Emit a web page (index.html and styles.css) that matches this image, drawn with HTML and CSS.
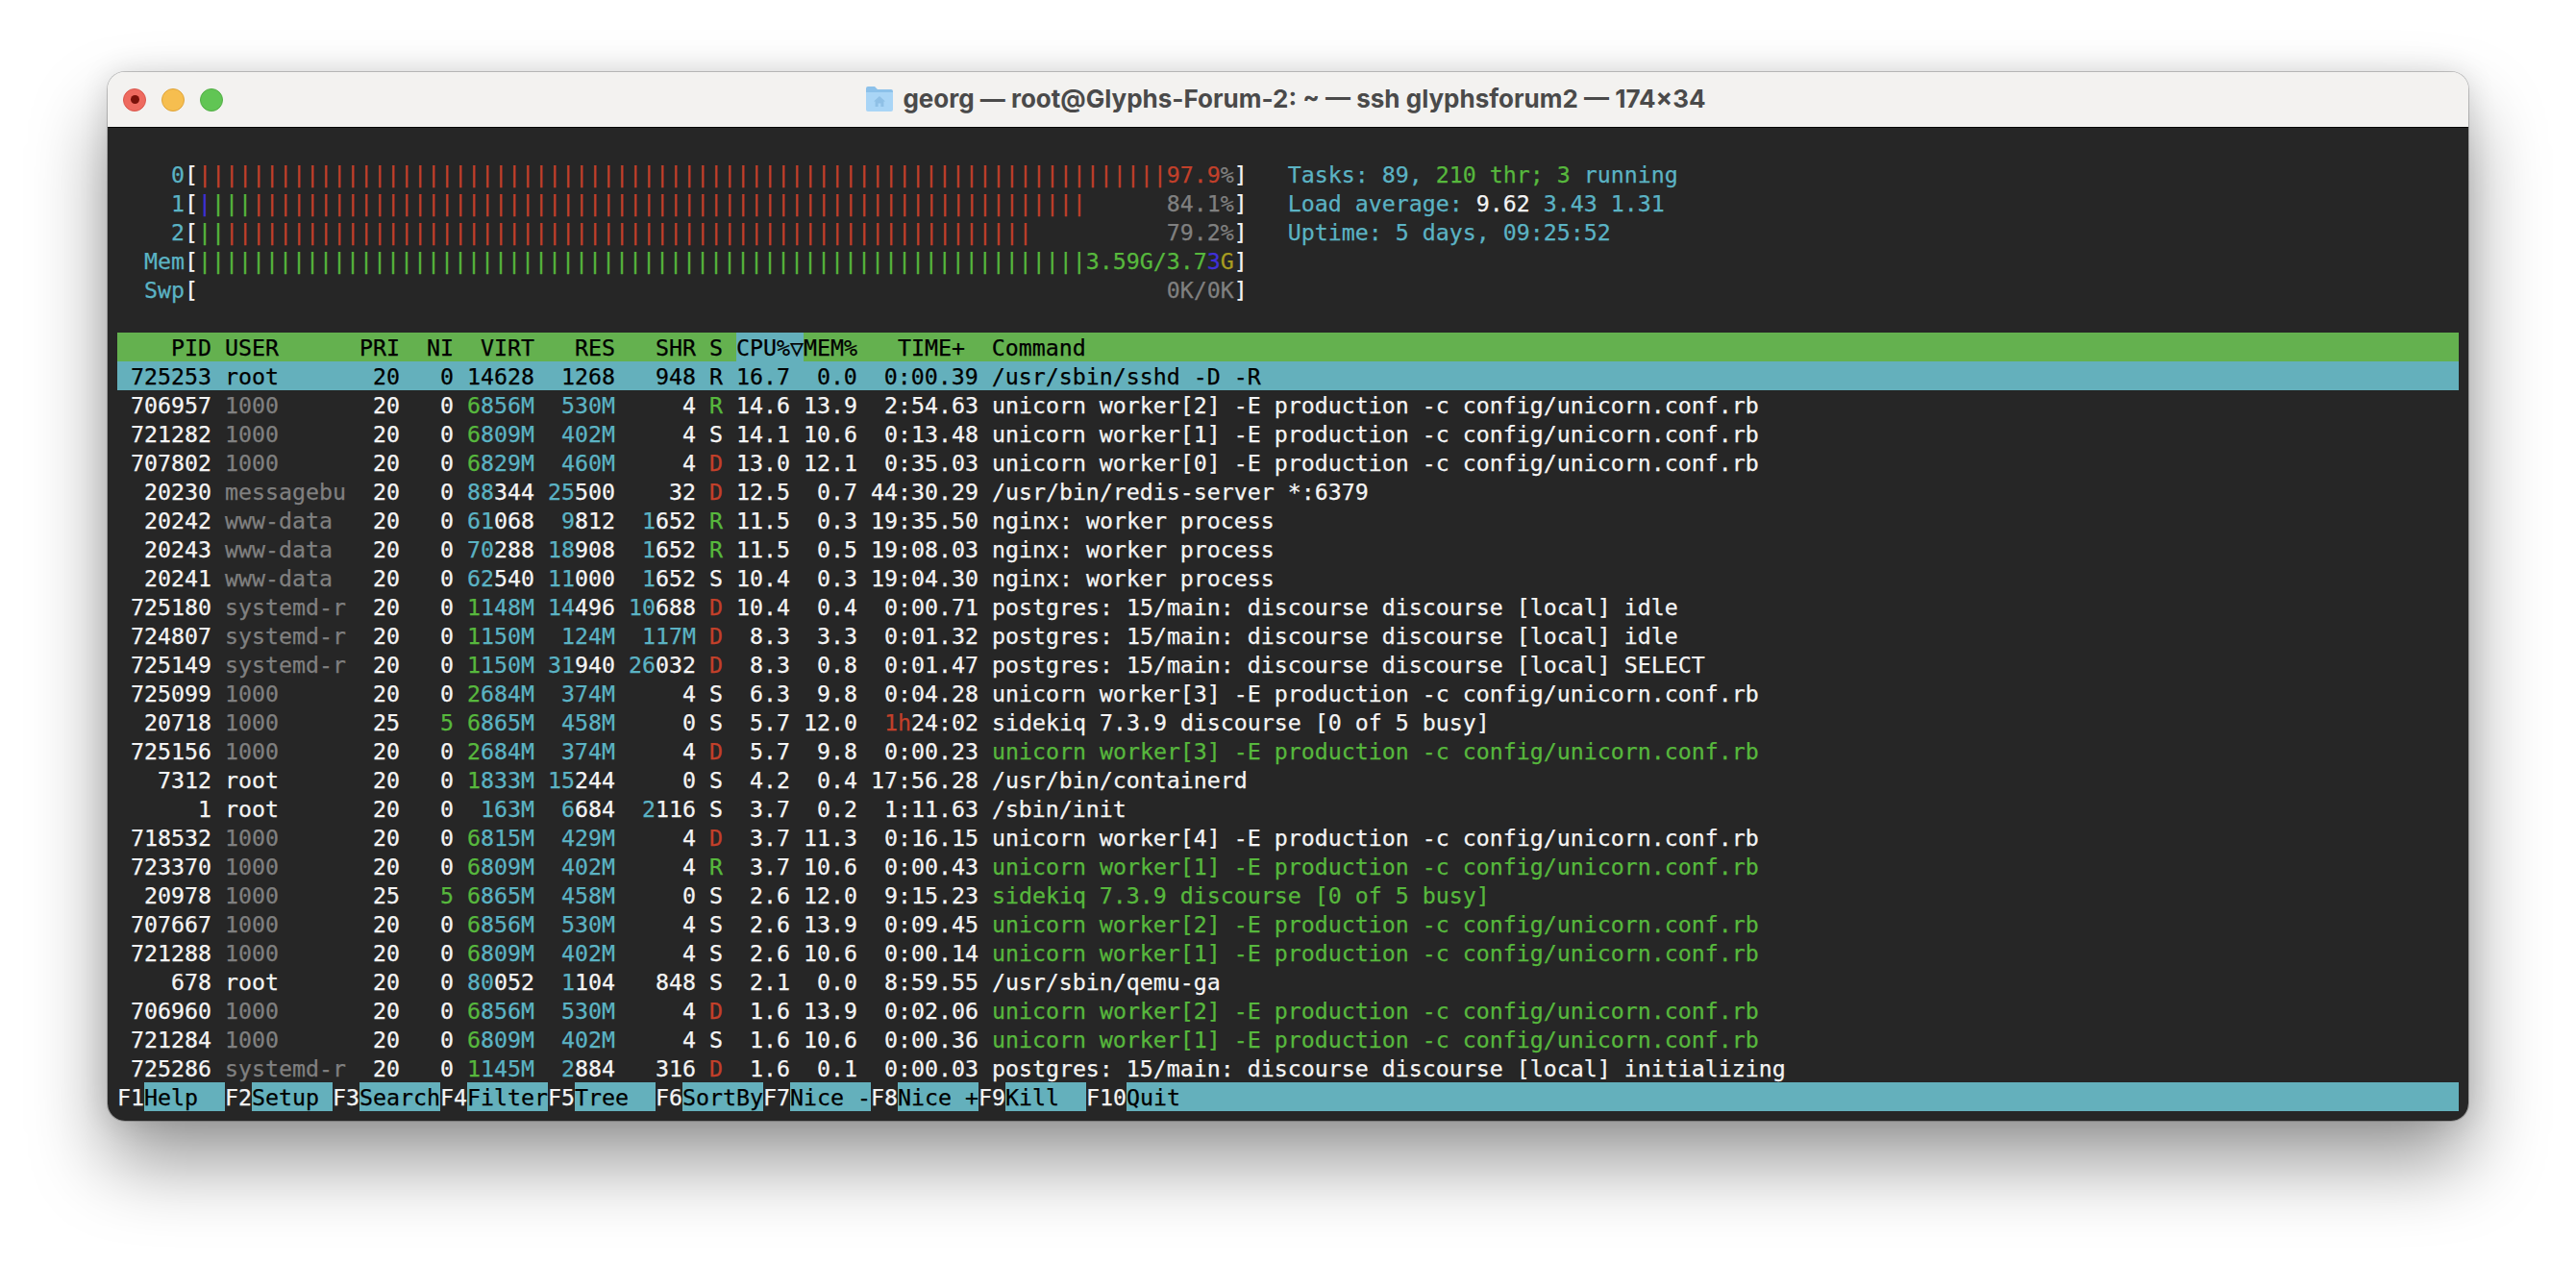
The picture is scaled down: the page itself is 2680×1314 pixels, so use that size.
FILE: index.html
```html
<!DOCTYPE html>
<html lang="en">
<head>
    <meta charset="UTF-8">
    <title>georg — root@Glyphs-Forum-2: ~ — ssh glyphsforum2 — 174×34</title>
    <link rel="stylesheet" href="styles.css">
</head>
<body>

    <div class="window">
        <!-- Title bar -->
        <div class="titlebar">
            <div class="lights">
                <span class="light close"></span>
                <span class="light minimize"></span>
                <span class="light zoom"></span>
            </div>
            <div class="title">
                <svg class="folder" width="30" height="27" viewBox="0 0 30 27">
                    <path d="M1 3a2 2 0 0 1 2-2h7l3 3h14a2 2 0 0 1 2 2v4H1z" fill="#8cc1ea"/>
                    <path d="M1 7h28v18a2 2 0 0 1-2 2H3a2 2 0 0 1-2-2z" fill="#a9d5f6"/>
                    <path d="M15 11l-6 5.5h1.6V22h3v-3.5h2.800V22h3v-5.500H21z" fill="#8fc0e6"/>
                </svg>
                <span>georg — root@Glyphs-Forum-2: ~ — ssh glyphsforum2 — 174×34</span>
            </div>
            <div></div>
        </div>

        <div class="terminal">
            <!-- Meters -->
            <div class="row"> </div>
            <div class="row"><span class="cy">    0</span>[<span class="rd">||||||||||||||||||||||||||||||||||||||||||||||||||||||||||||||||||||||||</span><span class="rd">97.9</span><span class="dm">%</span>]   <span class="cy">Tasks: 89, </span><span class="gn">210 thr; 3</span><span class="cy"> running</span></div>
            <div class="row"><span class="cy">    1</span>[<span class="bl">|</span><span class="gn">|||</span><span class="rd">||||||||||||||||||||||||||||||||||||||||||||||||||||||||||||||</span>      <span class="dm">84.1%</span>]   <span class="cy">Load average: </span>9.62 <span class="cy">3.43 1.31</span></div>
            <div class="row"><span class="cy">    2</span>[<span class="gn">||</span><span class="rd">||||||||||||||||||||||||||||||||||||||||||||||||||||||||||||</span>          <span class="dm">79.2%</span>]   <span class="cy">Uptime: 5 days, 09:25:52</span></div>
            <div class="row"><span class="cy">  Mem</span>[<span class="gn">||||||||||||||||||||||||||||||||||||||||||||||||||||||||||||||||||3.59G/3.7</span><span class="bl">3</span><span class="ye">G</span>]</div>
            <div class="row"><span class="cy">  Swp</span>[                                                                        <span class="dm">0K/0K</span>]</div>
            <div class="row"> </div>

            <!-- Process table -->
            <div class="row head">    PID USER      PRI  NI  VIRT   RES   SHR S <span class="sorted">CPU%▽</span>MEM%   TIME+  Command</div>
            <div class="row selected"> 725253 root       20   0 14628  1268   948 R 16.7  0.0  0:00.39 /usr/sbin/sshd -D -R</div>
            <div class="row"> 706957 <span class="dm">1000     </span>  20   0 <span class="gn">6</span><span class="cy">856M</span>  <span class="cy">530M</span>     4 <span class="gn">R</span> 14.6 13.9  2:54.63 unicorn worker[2] -E production -c config/unicorn.conf.rb</div>
            <div class="row"> 721282 <span class="dm">1000     </span>  20   0 <span class="gn">6</span><span class="cy">809M</span>  <span class="cy">402M</span>     4 S 14.1 10.6  0:13.48 unicorn worker[1] -E production -c config/unicorn.conf.rb</div>
            <div class="row"> 707802 <span class="dm">1000     </span>  20   0 <span class="gn">6</span><span class="cy">829M</span>  <span class="cy">460M</span>     4 <span class="rd">D</span> 13.0 12.1  0:35.03 unicorn worker[0] -E production -c config/unicorn.conf.rb</div>
            <div class="row">  20230 <span class="dm">messagebu</span>  20   0 <span class="cy">88</span>344 <span class="cy">25</span>500    32 <span class="rd">D</span> 12.5  0.7 44:30.29 /usr/bin/redis-server *:6379</div>
            <div class="row">  20242 <span class="dm">www-data </span>  20   0 <span class="cy">61</span>068  <span class="cy">9</span>812  <span class="cy">1</span>652 <span class="gn">R</span> 11.5  0.3 19:35.50 nginx: worker process</div>
            <div class="row">  20243 <span class="dm">www-data </span>  20   0 <span class="cy">70</span>288 <span class="cy">18</span>908  <span class="cy">1</span>652 <span class="gn">R</span> 11.5  0.5 19:08.03 nginx: worker process</div>
            <div class="row">  20241 <span class="dm">www-data </span>  20   0 <span class="cy">62</span>540 <span class="cy">11</span>000  <span class="cy">1</span>652 S 10.4  0.3 19:04.30 nginx: worker process</div>
            <div class="row"> 725180 <span class="dm">systemd-r</span>  20   0 <span class="gn">1</span><span class="cy">148M</span> <span class="cy">14</span>496 <span class="cy">10</span>688 <span class="rd">D</span> 10.4  0.4  0:00.71 postgres: 15/main: discourse discourse [local] idle</div>
            <div class="row"> 724807 <span class="dm">systemd-r</span>  20   0 <span class="gn">1</span><span class="cy">150M</span>  <span class="cy">124M</span>  <span class="cy">117M</span> <span class="rd">D</span>  8.3  3.3  0:01.32 postgres: 15/main: discourse discourse [local] idle</div>
            <div class="row"> 725149 <span class="dm">systemd-r</span>  20   0 <span class="gn">1</span><span class="cy">150M</span> <span class="cy">31</span>940 <span class="cy">26</span>032 <span class="rd">D</span>  8.3  0.8  0:01.47 postgres: 15/main: discourse discourse [local] SELECT</div>
            <div class="row"> 725099 <span class="dm">1000     </span>  20   0 <span class="gn">2</span><span class="cy">684M</span>  <span class="cy">374M</span>     4 S  6.3  9.8  0:04.28 unicorn worker[3] -E production -c config/unicorn.conf.rb</div>
            <div class="row">  20718 <span class="dm">1000     </span>  25   <span class="gn">5</span> <span class="gn">6</span><span class="cy">865M</span>  <span class="cy">458M</span>     0 S  5.7 12.0  <span class="rd">1h</span>24:02 sidekiq 7.3.9 discourse [0 of 5 busy]</div>
            <div class="row"> 725156 <span class="dm">1000     </span>  20   0 <span class="gn">2</span><span class="cy">684M</span>  <span class="cy">374M</span>     4 <span class="rd">D</span>  5.7  9.8  0:00.23 <span class="gn">unicorn worker[3] -E production -c config/unicorn.conf.rb</span></div>
            <div class="row">   7312 root       20   0 <span class="gn">1</span><span class="cy">833M</span> <span class="cy">15</span>244     0 S  4.2  0.4 17:56.28 /usr/bin/containerd</div>
            <div class="row">      1 root       20   0  <span class="cy">163M</span>  <span class="cy">6</span>684  <span class="cy">2</span>116 S  3.7  0.2  1:11.63 /sbin/init</div>
            <div class="row"> 718532 <span class="dm">1000     </span>  20   0 <span class="gn">6</span><span class="cy">815M</span>  <span class="cy">429M</span>     4 <span class="rd">D</span>  3.7 11.3  0:16.15 unicorn worker[4] -E production -c config/unicorn.conf.rb</div>
            <div class="row"> 723370 <span class="dm">1000     </span>  20   0 <span class="gn">6</span><span class="cy">809M</span>  <span class="cy">402M</span>     4 <span class="gn">R</span>  3.7 10.6  0:00.43 <span class="gn">unicorn worker[1] -E production -c config/unicorn.conf.rb</span></div>
            <div class="row">  20978 <span class="dm">1000     </span>  25   <span class="gn">5</span> <span class="gn">6</span><span class="cy">865M</span>  <span class="cy">458M</span>     0 S  2.6 12.0  9:15.23 <span class="gn">sidekiq 7.3.9 discourse [0 of 5 busy]</span></div>
            <div class="row"> 707667 <span class="dm">1000     </span>  20   0 <span class="gn">6</span><span class="cy">856M</span>  <span class="cy">530M</span>     4 S  2.6 13.9  0:09.45 <span class="gn">unicorn worker[2] -E production -c config/unicorn.conf.rb</span></div>
            <div class="row"> 721288 <span class="dm">1000     </span>  20   0 <span class="gn">6</span><span class="cy">809M</span>  <span class="cy">402M</span>     4 S  2.6 10.6  0:00.14 <span class="gn">unicorn worker[1] -E production -c config/unicorn.conf.rb</span></div>
            <div class="row">    678 root       20   0 <span class="cy">80</span>052  <span class="cy">1</span>104   848 S  2.1  0.0  8:59.55 /usr/sbin/qemu-ga</div>
            <div class="row"> 706960 <span class="dm">1000     </span>  20   0 <span class="gn">6</span><span class="cy">856M</span>  <span class="cy">530M</span>     4 <span class="rd">D</span>  1.6 13.9  0:02.06 <span class="gn">unicorn worker[2] -E production -c config/unicorn.conf.rb</span></div>
            <div class="row"> 721284 <span class="dm">1000     </span>  20   0 <span class="gn">6</span><span class="cy">809M</span>  <span class="cy">402M</span>     4 S  1.6 10.6  0:00.36 <span class="gn">unicorn worker[1] -E production -c config/unicorn.conf.rb</span></div>
            <div class="row"> 725286 <span class="dm">systemd-r</span>  20   0 <span class="gn">1</span><span class="cy">145M</span>  <span class="cy">2</span>884   316 <span class="rd">D</span>  1.6  0.1  0:00.03 postgres: 15/main: discourse discourse [local] initializing</div>

            <!-- Function keys -->
            <div class="row fkeys"><span class="key">F1</span>Help  <span class="key">F2</span>Setup <span class="key">F3</span>Search<span class="key">F4</span>Filter<span class="key">F5</span>Tree  <span class="key">F6</span>SortBy<span class="key">F7</span>Nice -<span class="key">F8</span>Nice +<span class="key">F9</span>Kill  <span class="key">F10</span>Quit</div>
        </div>
    </div>

</body>
</html>
```

FILE: styles.css
```css
body {
    margin: 0;
    padding: 75px 112px 148px;
    background-color: #fff;
}

.window {
    width: 2456px;
    border-radius: 18px;
    overflow: hidden;
    box-shadow: 0 0 0 1px rgba(0, 0, 0, 0.2), 0 0 30px rgba(0, 0, 0, 0.12), 0 44px 80px rgba(0, 0, 0, 0.4);
}

.titlebar {
    display: grid;
    grid-template-columns: 1fr auto 1fr;
    align-items: center;
    height: 57px;
    background-color: #f3f2f0;
    border-bottom: 1px solid #000;
}

.lights {
    display: flex;
    gap: 16px;
    padding-left: 16px;
}

.light {
    display: flex;
    align-items: center;
    justify-content: center;
    width: 24px;
    height: 24px;
    border-radius: 50%;
    box-sizing: border-box;
}

.close {
    background-color: #ee6a5f;
    border: 1px solid #d9574d;
}

.close::after {
    content: "";
    width: 9px;
    height: 9px;
    border-radius: 50%;
    background-color: #7a1109;
}

.minimize {
    background-color: #f6be4f;
    border: 1px solid #dfa43a;
}

.zoom {
    background-color: #61c554;
    border: 1px solid #52ae46;
}

.title {
    display: flex;
    align-items: center;
    gap: 9px;
    padding: 0 5px 2px 0;
    font-family: Inter, sans-serif;
    font-size: 26px;
    font-weight: 650;
    color: #4a4a4a;
}

.folder {
    display: block;
}

.terminal {
    padding: 3px 10px 10px;
    background-color: #262626;
    color: #f4f4f4;
    font-family: "DejaVu Sans Mono", monospace;
    font-size: 23.25px;
    line-height: 32px;
    -webkit-text-stroke: 0.25px;
}

.row {
    height: 30px;
    white-space: pre;
}

.head {
    background-color: #64b14f;
    color: #000;
}

.sorted {
    display: inline-block;
    height: 30px;
    background-color: #64b0bc;
}

.selected {
    background-color: #64b0bc;
    color: #000;
}

.fkeys {
    background-color: #64b0bc;
    color: #000;
}

.key {
    display: inline-block;
    height: 30px;
    background-color: #262626;
    color: #f4f4f4;
}

.cy {
    color: #5bb3c4;
}

.gn {
    color: #57b83d;
}

.rd {
    color: #c2402a;
}

.dm {
    color: #808080;
}

.bl {
    color: #4030d8;
}

.ye {
    color: #a89c20;
}
```
